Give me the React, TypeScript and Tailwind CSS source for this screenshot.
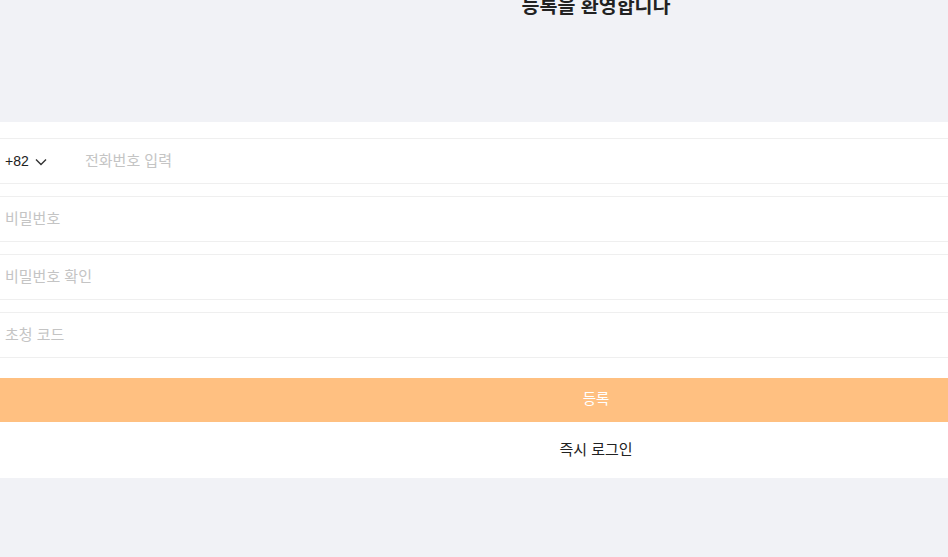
export default function App() {
  const fields = ["비밀번호", "비밀번호 확인", "초청 코드"];

  return (
    <div
      className="w-[948px] h-[557px] overflow-hidden bg-[#f1f2f6]"
      style={{ fontFamily: '"Liberation Sans", "Noto Sans CJK KR", sans-serif' }}
    >
      <div className="w-[1192px]">
        <div className="h-[122px] flex flex-col">
          <h1 className="mt-[-8px] text-center text-[19.5px] leading-[28px] font-bold text-[#222]">
            등록을 환영합니다
          </h1>
        </div>

        <section className="bg-white pt-4">
          <div className="flex flex-col gap-3">
            <div className="flex items-center h-[46px] border-y border-[#efefef]">
              <div className="flex items-center w-[85px] pl-[5px] text-[14px] text-[#222]">
                <span>+82</span>
                <svg
                  width="12"
                  height="8"
                  viewBox="0 0 12 8"
                  className="ml-[6px] mt-[1px]"
                  fill="none"
                  stroke="#333"
                  strokeWidth="1.4"
                >
                  <path d="M1 1.5 L6 6.5 L11 1.5" />
                </svg>
              </div>
              <span className="text-[15px] text-[#c4c4c4]">전화번호 입력</span>
            </div>

            {fields.map((f) => (
              <div
                key={f}
                className="flex items-center h-[46px] pl-[5px] border-y border-[#efefef] text-[15px] text-[#c4c4c4]"
              >
                {f}
              </div>
            ))}
          </div>

          <button className="mt-5 w-full h-[44px] bg-[#ffc081] text-white text-[14.5px]">
            등록
          </button>

          <div className="h-[56px] flex items-center justify-center text-[15px] text-[#222]">
            즉시 로그인
          </div>
        </section>
      </div>
    </div>
  );
}
